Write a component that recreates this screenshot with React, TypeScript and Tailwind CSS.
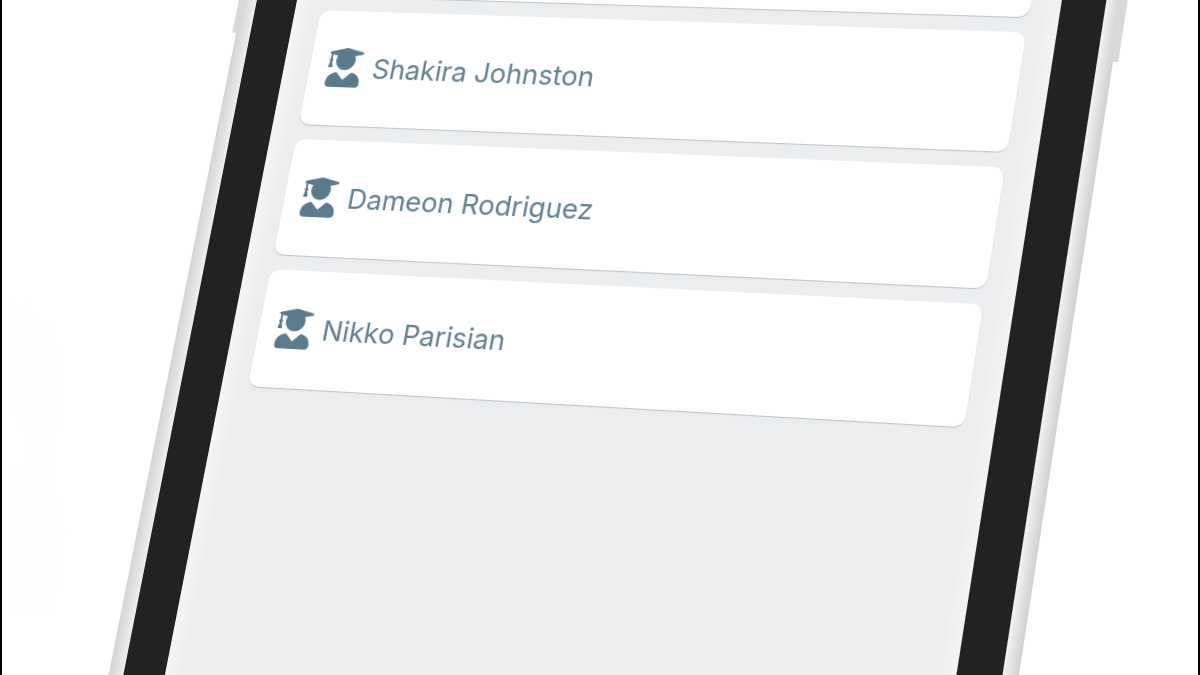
import { FaUserGraduate } from "react-icons/fa";

type P = [number, number];

function solve(A: number[][], b: number[]): number[] {
  const n = b.length;
  const M = A.map((r, i) => [...r, b[i]]);
  for (let c = 0; c < n; c++) {
    let p = c;
    for (let r = c + 1; r < n; r++) if (Math.abs(M[r][c]) > Math.abs(M[p][c])) p = r;
    [M[c], M[p]] = [M[p], M[c]];
    for (let r = 0; r < n; r++) {
      if (r === c) continue;
      const f = M[r][c] / M[c][c];
      for (let k = c; k <= n; k++) M[r][k] -= f * M[c][k];
    }
  }
  return M.map((r, i) => r[n] / r[i]);
}

function homography(src: P[], dst: P[]): string {
  const A: number[][] = [];
  const b: number[] = [];
  src.forEach(([x, y], i) => {
    const [u, v] = dst[i];
    A.push([x, y, 1, 0, 0, 0, -u * x, -u * y]);
    b.push(u);
    A.push([0, 0, 0, x, y, 1, -v * x, -v * y]);
    b.push(v);
  });
  const h = solve(A, b);
  return `matrix3d(${h[0]},${h[3]},0,${h[6]},${h[1]},${h[4]},0,${h[7]},0,0,1,0,${h[2]},${h[5]},0,1)`;
}

const FX = 57;
const FY = 100;
const SW = 760;
const SH = 710;
const transform = homography(
  [
    [FX, FY],
    [FX + SW, FY],
    [FX, FY + SH],
    [FX + SW, FY + SH],
  ],
  [
    [299, -10],
    [1060, 13],
    [160, 700],
    [943, 762],
  ],
);

const names = ["Shakira Johnston", "Dameon Rodriguez", "Nikko Parisian"];

export default function App() {
  return (
    <div className="relative h-[675px] w-[1200px] overflow-hidden border-x-2 border-black bg-white">
      <svg className="absolute left-[8px] top-[300px] blur-[6px]" width="60" height="310" viewBox="0 0 60 310">
        <path d="M6 10 L36 40 L46 110 L30 150 L6 90 Z" fill="#fdfdfd" />
        <path d="M6 190 L32 160 L44 240 L36 300 L6 300 Z" fill="#fdfdfe" />
      </svg>
      <div
        className="absolute left-[-2px] top-0 w-[874px] origin-top-left blur-[0.5px]"
        style={{ transform }}
      >
        <div className="absolute left-[-4px] top-[40px] h-[106px] w-[8px] bg-[#d9d9d9]" />
        <div className="absolute right-[-5px] top-[40px] h-[106px] w-[8px] bg-[#d9d9d9]" />
        <div className="rounded-t-[40px] bg-[linear-gradient(90deg,#d4d4d4,#efefef_15px,#f3f3f3_calc(100%-15px),#d0d0d0)] px-[15px] pt-[20px]">
          <div className="rounded-t-[30px] bg-[#222222] px-[42px] pt-[20px]">
            <div className="h-[860px] w-[760px] bg-[linear-gradient(90deg,#f3f5f6,#ebedef_18px,#ebedef_calc(100%-18px),#f3f3f3)]">
              <div className="flex flex-col gap-[15px] pl-[27px] pr-[29px] pt-[65px]">
                <div className="-mt-[117px] h-[117px] rounded-[10px] bg-white shadow-[0_1px_1px_#bcc2c6]" />
                {names.map((n) => (
                  <div
                    key={n}
                    className="flex h-[117px] items-start gap-[9px] rounded-[10px] bg-white pl-[16px] pt-[38px] shadow-[0_1px_1px_#bcc2c6]"
                  >
                    <FaUserGraduate className="text-[#5a7b8e]" size={40} />
                    <span className="font-['Inter',sans-serif] text-[27.6px] leading-[40px] text-[#64808f]">
                      {n}
                    </span>
                  </div>
                ))}
              </div>
            </div>
          </div>
        </div>
      </div>
    </div>
  );
}
